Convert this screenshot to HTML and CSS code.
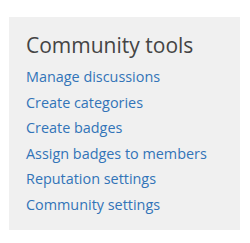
FILE: index.html
```html
<!DOCTYPE html>
<html>
<head>
<meta charset="utf-8">
<link rel="stylesheet" href="styles.css">
</head>
<body>
<div class="panel">
  <h2 class="title">Community tools</h2>
  <ul class="links">
    <li><a href="#">Manage discussions</a></li>
    <li><a href="#">Create categories</a></li>
    <li><a href="#">Create badges</a></li>
    <li><a href="#">Assign badges to members</a></li>
    <li><a href="#">Reputation settings</a></li>
    <li><a href="#">Community settings</a></li>
  </ul>
</div>
</body>
</html>
```

FILE: styles.css
```css
html, body {
  margin: 0;
  padding: 0;
  background: #ffffff;
}
body {
  font-family: "Open Sans", "Noto Sans", sans-serif;
}
.panel {
  margin: 17px 0 0 9px;
  width: 231px;
  height: 213px;
  box-sizing: border-box;
  background: #f0f0f0;
  padding: 14px 0 0 17px;
}
.title {
  margin: 0;
  font-size: 21px;
  font-weight: 400;
  line-height: 28px;
  color: #444444;
}
.links {
  list-style: none;
  margin: 5px 0 0 0;
  padding: 0;
  display: flex;
  flex-direction: column;
}
.links li {
  line-height: 25.5px;
  font-size: 14.4px;
}
.links a {
  color: #3274b8;
  text-decoration: none;
}
```
